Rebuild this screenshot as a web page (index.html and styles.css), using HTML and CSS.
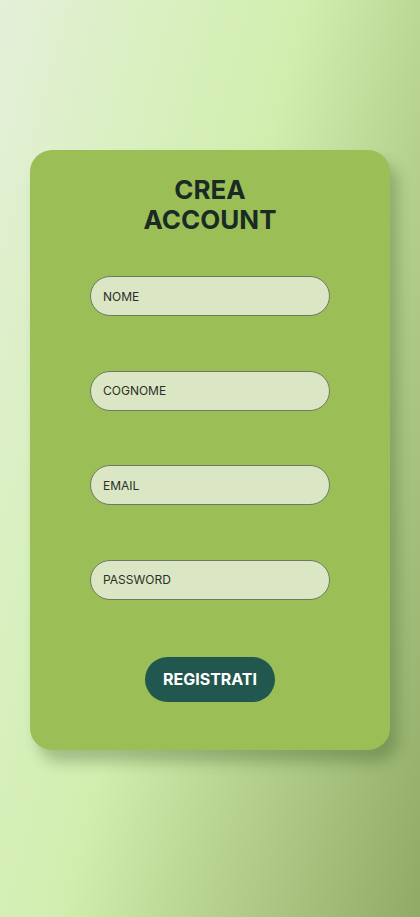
FILE: index.html
```html
<!DOCTYPE html>
<html lang="it">
<head>
<meta charset="utf-8">
<meta name="viewport" content="width=device-width, initial-scale=1">
<title>Crea Account</title>
<link rel="stylesheet" href="styles.css">
</head>
<body>
  <main class="page">
    <form class="card">
      <h1 class="title">CREA<br>ACCOUNT</h1>
      <div class="fields">
        <input class="field" type="text" placeholder="NOME">
        <input class="field" type="text" placeholder="COGNOME">
        <input class="field" type="email" placeholder="EMAIL">
        <input class="field" type="password" placeholder="PASSWORD">
      </div>
      <button class="submit" type="button">REGISTRATI</button>
    </form>
  </main>
</body>
</html>
```

FILE: styles.css
```css
* { box-sizing: border-box; }
html, body { margin: 0; padding: 0; }
body {
  width: 420px;
  height: 917px;
  overflow: hidden;
  font-family: "Inter", "Liberation Sans", sans-serif;
  background: linear-gradient(105deg, #e5efd9 0%, #d9f0c0 25%, #d1eeae 46%, #b6d28e 68%, #8fab66 100%);
}
.page {
  display: flex;
  justify-content: center;
  padding-top: 150px;
}
.card {
  width: 360px;
  height: 600px;
  background: #9bbf56;
  border-radius: 22px;
  box-shadow: 8px 12px 14px rgba(40, 60, 20, 0.28);
  display: flex;
  flex-direction: column;
  align-items: center;
  padding-top: 25px;
}
.title {
  margin: 0;
  font-size: 26px;
  line-height: 30px;
  font-weight: 700;
  color: #1a2a24;
  text-align: center;
}
.fields {
  display: flex;
  flex-direction: column;
  gap: 54.67px;
  margin-top: 41px;
}
.field {
  width: 240px;
  height: 40px;
  border: 1px solid #6e7866;
  border-radius: 20px;
  background: #dbe6c4;
  padding: 0 12px;
  font-family: inherit;
  font-size: 12px;
  color: #2b2f28;
  outline: none;
}
.field::placeholder {
  color: #2b2f28;
  opacity: 1;
}
.submit {
  margin-top: 57px;
  width: 130px;
  height: 45px;
  border: none;
  border-radius: 23px;
  background: #22574f;
  color: #ffffff;
  font-family: inherit;
  font-size: 16px;
  font-weight: 700;
  cursor: pointer;
}
```
